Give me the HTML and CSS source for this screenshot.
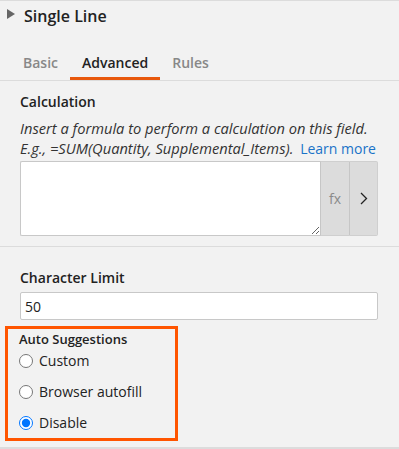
FILE: index.html
```html
<!DOCTYPE html>
<html lang="en">
<head>
  <meta charset="UTF-8">
  <title>Single Line</title>
  <link rel="stylesheet" href="styles.css">
</head>
<body>
  <div class="panel">
    <div class="panel-head">
      <span class="caret"></span>
      <h2>Single Line</h2>
    </div>

    <div class="tabs">
      <span class="tab">Basic</span>
      <span class="tab active">Advanced</span>
      <span class="tab">Rules</span>
    </div>

    <div class="section calc">
      <label class="field-label" for="calc">Calculation</label>
      <p class="hint">Insert a formula to perform a calculation on this field.<br>E.g., =SUM(Quantity, Supplemental_Items). <a href="#">Learn more</a></p>
      <div class="formula">
        <textarea id="calc"></textarea>
        <button class="fx-btn" type="button">fx</button>
        <button class="go-btn" type="button">
          <svg width="8" height="13" viewBox="0 0 8 13"><path d="M1 1l5.5 5.5L1 12" fill="none" stroke="#222" stroke-width="1.3"/></svg>
        </button>
      </div>
    </div>

    <div class="section limit">
      <label class="field-label" for="limit">Character Limit</label>
      <input id="limit" type="text" value="50">
    </div>

    <div class="highlight">
      <div class="small-label">Auto Suggestions</div>
      <label class="radio"><input type="radio" name="auto"> Custom</label>
      <label class="radio"><input type="radio" name="auto"> Browser autofill</label>
      <label class="radio"><input type="radio" name="auto" checked> Disable</label>
    </div>
  </div>
</body>
</html>
```

FILE: styles.css
```css
* {
  box-sizing: border-box;
}

body {
  margin: 0;
  background: #f2f2f2;
  font-family: 'Open Sans', sans-serif;
  color: #222;
}

.panel {
  border-top: 1px solid #dcdcdc;
  border-bottom: 2px solid #dcdcdc;
  height: 449px;
}

.panel-head {
  display: flex;
  align-items: center;
  height: 30px;
  padding-left: 7px;
}

.caret {
  flex: none;
  width: 0;
  height: 0;
  border-top: 5px solid transparent;
  border-bottom: 5px solid transparent;
  border-left: 8px solid #666;
  margin-right: 9px;
  margin-top: -5px;
}

.panel-head h2 {
  margin: 0;
  font-size: 16px;
  font-weight: 600;
}

.tabs {
  display: flex;
  margin-top: 17px;
  padding-left: 11px;
  border-bottom: 1px solid #dcdcdc;
}

.tab {
  padding: 5px 12px 4px;
  font-size: 14px;
  line-height: 20px;
  color: #888;
  font-weight: 600;
  border-bottom: 3px solid transparent;
}

.tab.active {
  color: #222;
  border-bottom-color: #e8580c;
}

.section {
  padding: 11px 8px 10px 20px;
  border-bottom: 1px solid #dcdcdc;
}

.field-label {
  display: block;
  font-size: 14px;
  font-weight: 600;
  line-height: 20px;
}

.hint {
  margin: 6px 0 2px;
  font-size: 14.67px;
  font-style: italic;
  line-height: 20px;
  color: #333;
  white-space: nowrap;
}

.hint a {
  color: #1a73c8;
  text-decoration: none;
  font-style: normal;
  font-size: 14px;
  margin-left: 3px;
}

.formula {
  display: flex;
  height: 75px;
  margin-right: 13px;
}

.formula textarea {
  flex: 1;
  border: 1px solid #c8c8c8;
  border-right: none;
  border-radius: 2px 0 0 2px;
  background: #fff;
  resize: vertical;
  font: inherit;
}

.fx-btn, .go-btn {
  width: 29px;
  border: 1px solid #cfcfcf;
  border-left: 1px solid #c6c6c6;
  background: #dcdcdc;
  padding: 0;
  display: flex;
  align-items: center;
  justify-content: center;
}

.fx-btn {
  border-right: none;
  font-family: 'Open Sans', sans-serif;
  font-size: 14px;
  color: #8a8a8a;
}

.go-btn {
  border-radius: 0 2px 2px 0;
}

.limit {
  padding: 21px 21px 0 20px;
  border-bottom: none;
}

.limit input {
  display: block;
  width: 100%;
  height: 28px;
  margin-top: 4px;
  padding: 0 4px;
  border: 1px solid #c8c8c8;
  border-radius: 2px;
  background: #fff;
  font: inherit;
  font-size: 14px;
  color: #222;
}

.highlight {
  width: 173px;
  margin: 6px 0 0 5px;
  padding: 3px 10px 0 11px;
  border: 3px solid #ff5500;
}

.small-label {
  font-size: 13px;
  font-weight: 600;
  line-height: 14px;
  margin-bottom: -1px;
}

.radio {
  display: flex;
  align-items: center;
  height: 31px;
  font-size: 14px;
}

.radio input {
  margin: 0 6px 0 0;
  width: 14px;
  height: 14px;
}
```
